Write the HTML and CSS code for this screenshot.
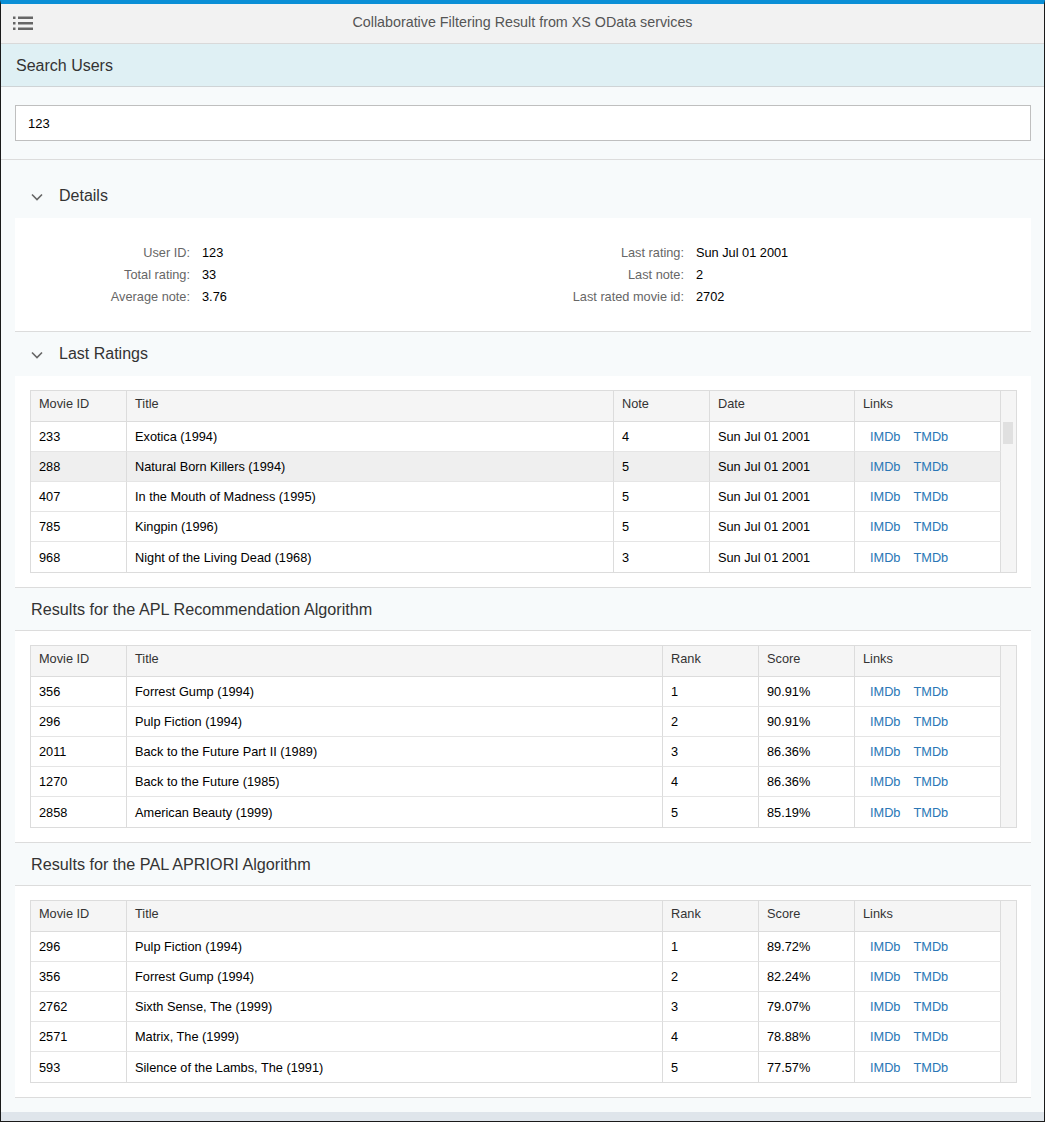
FILE: index.html
```html
<!DOCTYPE html>
<html>
<head>
<meta charset="utf-8">
<link rel="stylesheet" href="styles.css">
</head>
<body>
<div class="app">
  <header class="shell">
    <svg class="menu" width="20" height="14" viewBox="0 0 20 14">
      <rect x="0" y="0.5" width="2.5" height="2.5" fill="#666"/>
      <rect x="5" y="0.5" width="15" height="2.5" fill="#666"/>
      <rect x="0" y="6" width="2.5" height="2.5" fill="#666"/>
      <rect x="5" y="6" width="15" height="2.5" fill="#666"/>
      <rect x="0" y="11.5" width="2.5" height="2.5" fill="#666"/>
      <rect x="5" y="11.5" width="15" height="2.5" fill="#666"/>
    </svg>
    <div class="shell-title">Collaborative Filtering Result from XS OData services</div>
  </header>
  <div class="subheader">Search Users</div>
  <div class="search-area">
    <div class="input">123</div>
  </div>
  <main class="content">
    <section class="panel first">
      <div class="panel-head">
        <svg class="chev" width="12" height="8" viewBox="0 0 12 8"><path d="M1 1.5 L6 6.5 L11 1.5" fill="none" stroke="#666" stroke-width="1.6"/></svg>
        <span>Details</span>
      </div>
      <div class="panel-body details">
        <div class="form-col left">
          <span class="lbl">User ID:</span><span class="val">123</span>
          <span class="lbl">Total rating:</span><span class="val">33</span>
          <span class="lbl">Average note:</span><span class="val">3.76</span>
        </div>
        <div class="form-col right">
          <span class="lbl">Last rating:</span><span class="val">Sun Jul 01 2001</span>
          <span class="lbl">Last note:</span><span class="val">2</span>
          <span class="lbl">Last rated movie id:</span><span class="val">2702</span>
        </div>
      </div>
    </section>

    <section class="panel">
      <div class="panel-head">
        <svg class="chev" width="12" height="8" viewBox="0 0 12 8"><path d="M1 1.5 L6 6.5 L11 1.5" fill="none" stroke="#666" stroke-width="1.6"/></svg>
        <span>Last Ratings</span>
      </div>
      <div class="panel-body tbody-wrap">
        <div class="grid">
          <table>
            <colgroup><col style="width:96px"><col style="width:487px"><col style="width:96px"><col style="width:145px"><col style="width:146px"></colgroup>
            <thead><tr><th>Movie ID</th><th>Title</th><th>Note</th><th>Date</th><th>Links</th></tr></thead>
            <tbody>
              <tr><td>233</td><td>Exotica (1994)</td><td>4</td><td>Sun Jul 01 2001</td><td class="links"><a>IMDb</a><a>TMDb</a></td></tr>
              <tr class="hover"><td>288</td><td>Natural Born Killers (1994)</td><td>5</td><td>Sun Jul 01 2001</td><td class="links"><a>IMDb</a><a>TMDb</a></td></tr>
              <tr><td>407</td><td>In the Mouth of Madness (1995)</td><td>5</td><td>Sun Jul 01 2001</td><td class="links"><a>IMDb</a><a>TMDb</a></td></tr>
              <tr><td>785</td><td>Kingpin (1996)</td><td>5</td><td>Sun Jul 01 2001</td><td class="links"><a>IMDb</a><a>TMDb</a></td></tr>
              <tr><td>968</td><td>Night of the Living Dead (1968)</td><td>3</td><td>Sun Jul 01 2001</td><td class="links"><a>IMDb</a><a>TMDb</a></td></tr>
            </tbody>
          </table>
          <div class="vscroll"><div class="thumb"></div></div>
        </div>
      </div>
    </section>

    <section class="panel">
      <div class="panel-head plain"><span>Results for the APL Recommendation Algorithm</span></div>
      <div class="panel-body tbody-wrap">
        <div class="grid">
          <table>
            <colgroup><col style="width:96px"><col style="width:536px"><col style="width:96px"><col style="width:96px"><col style="width:146px"></colgroup>
            <thead><tr><th>Movie ID</th><th>Title</th><th>Rank</th><th>Score</th><th>Links</th></tr></thead>
            <tbody>
              <tr><td>356</td><td>Forrest Gump (1994)</td><td>1</td><td>90.91%</td><td class="links"><a>IMDb</a><a>TMDb</a></td></tr>
              <tr><td>296</td><td>Pulp Fiction (1994)</td><td>2</td><td>90.91%</td><td class="links"><a>IMDb</a><a>TMDb</a></td></tr>
              <tr><td>2011</td><td>Back to the Future Part II (1989)</td><td>3</td><td>86.36%</td><td class="links"><a>IMDb</a><a>TMDb</a></td></tr>
              <tr><td>1270</td><td>Back to the Future (1985)</td><td>4</td><td>86.36%</td><td class="links"><a>IMDb</a><a>TMDb</a></td></tr>
              <tr><td>2858</td><td>American Beauty (1999)</td><td>5</td><td>85.19%</td><td class="links"><a>IMDb</a><a>TMDb</a></td></tr>
            </tbody>
          </table>
          <div class="vscroll"></div>
        </div>
      </div>
    </section>

    <section class="panel">
      <div class="panel-head plain"><span>Results for the PAL APRIORI Algorithm</span></div>
      <div class="panel-body tbody-wrap">
        <div class="grid">
          <table>
            <colgroup><col style="width:96px"><col style="width:536px"><col style="width:96px"><col style="width:96px"><col style="width:146px"></colgroup>
            <thead><tr><th>Movie ID</th><th>Title</th><th>Rank</th><th>Score</th><th>Links</th></tr></thead>
            <tbody>
              <tr><td>296</td><td>Pulp Fiction (1994)</td><td>1</td><td>89.72%</td><td class="links"><a>IMDb</a><a>TMDb</a></td></tr>
              <tr><td>356</td><td>Forrest Gump (1994)</td><td>2</td><td>82.24%</td><td class="links"><a>IMDb</a><a>TMDb</a></td></tr>
              <tr><td>2762</td><td>Sixth Sense, The (1999)</td><td>3</td><td>79.07%</td><td class="links"><a>IMDb</a><a>TMDb</a></td></tr>
              <tr><td>2571</td><td>Matrix, The (1999)</td><td>4</td><td>78.88%</td><td class="links"><a>IMDb</a><a>TMDb</a></td></tr>
              <tr><td>593</td><td>Silence of the Lambs, The (1991)</td><td>5</td><td>77.57%</td><td class="links"><a>IMDb</a><a>TMDb</a></td></tr>
            </tbody>
          </table>
          <div class="vscroll"></div>
        </div>
      </div>
    </section>
  </main>
  <footer class="foot"></footer>
</div>
</body>
</html>
```

FILE: styles.css
```css
* { box-sizing: border-box; }
html, body { margin: 0; padding: 0; }
body {
  font-family: "Liberation Sans", Arial, sans-serif;
  font-size: 12.75px;
  color: #000;
  background: #fff;
}
.app {
  width: 1045px;
  height: 1122px;
  border: 1px solid #1a1a1a;
  border-top: 4px solid #0a8fd6;
  background: #f7fafb;
  display: flex;
  flex-direction: column;
  overflow: hidden;
}
.shell {
  height: 40px;
  flex: none;
  background: #f2f2f2;
  border-bottom: 1px solid #d9d9d9;
  display: flex;
  align-items: center;
  position: relative;
}
.menu { margin-left: 12px; margin-top: -2px; }
.shell-title {
  flex: 1;
  text-align: center;
  font-size: 14.3px;
  color: #555;
  margin-right: 32px;
  margin-top: -3px;
}
.subheader {
  height: 43px;
  flex: none;
  background: #dff0f4;
  border-bottom: 1px solid #cfd4d6;
  font-size: 16px;
  color: #333;
  padding-left: 15px;
  padding-top: 1px;
  display: flex;
  align-items: center;
}
.search-area {
  flex: none;
  padding: 18px 13px 18px 14px;
  border-bottom: 1px solid #dcdcdc;
}
.input {
  height: 36px;
  background: #fff;
  border: 1px solid #bfbfbf;
  padding-left: 12px;
  display: flex;
  align-items: center;
  font-size: 13px;
  color: #000;
}
.content {
  flex: 1;
  padding: 14px 13px 0 14px;
}
.panel {
  border-bottom: 1px solid #dcdcdc;
}
.panel-head {
  height: 44px;
  display: flex;
  align-items: center;
  font-size: 16px;
  color: #333;
}
.panel-head .chev { margin-left: 16px; margin-right: 16px; margin-top: 1px; }
.panel-head.plain {
  height: 43px;
  padding-left: 16px;
  padding-top: 1px;
  font-size: 16.2px;
  border-bottom: 1px solid #dcdcdc;
}
.panel-body { background: #fff; }
.details {
  padding: 24px 0 23px;
  display: flex;
  height: 113px;
}
.form-col {
  display: grid;
  grid-auto-rows: 21.7px;
  align-items: center;
  column-gap: 12px;
}
.form-col.left { width: 507px; grid-template-columns: 175px auto; }
.form-col.right { grid-template-columns: 162px auto; }
.lbl { text-align: right; color: #666; }
.val { color: #000; }
.tbody-wrap { padding: 14px 14px 14px 15px; }
.grid {
  display: flex;
  border: 1px solid #dcdcdc;
  background: #f5f5f5;
}
table {
  width: 970px;
  border-collapse: separate;
  border-spacing: 0;
  table-layout: fixed;
  background: #fff;
}
th, td {
  text-align: left;
  padding: 0 0 0 8px;
  border-right: 1px solid #dcdcdc;
  white-space: nowrap;
  overflow: hidden;
}
th {
  height: 31px;
  font-weight: normal;
  color: #333;
  background: #f5f5f5;
  border-bottom: 1px solid #dcdcdc;
  padding-bottom: 5px;
}
td {
  height: 30px;
  border-bottom: 1px solid #e5e5e5;
  padding-left: 8px;
}
tbody tr:last-child td { border-bottom: none; height: 30px; }
tr.hover td { background: #efefef; }
td.links { padding-left: 15px; }
td.links a { color: #2a77b6; margin-right: 13px; }
.vscroll {
  flex: 1;
  margin-top: 31px;
  padding: 0 2px 0 2px;
  background: #f5f5f5;
}
.thumb {
  width: 10px;
  height: 22px;
  margin-top: 0;
  background: #e0e0e0;
}
.foot {
  flex: none;
  height: 9px;
  margin-top: 13px;
  background: #dfe5eb;
}
```
